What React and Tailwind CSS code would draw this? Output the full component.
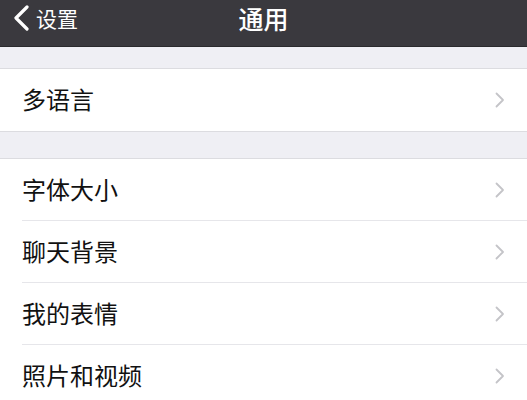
const font = { fontFamily: '"Noto Sans CJK SC", "Noto Sans", sans-serif' };

function Chevron() {
  return (
    <svg width="10" height="16" viewBox="0 0 10 16" className="shrink-0">
      <path d="M1.5 1.5 L8 8 L1.5 14.5" fill="none" stroke="#c4c4c8" strokeWidth="1.8" strokeLinecap="round" strokeLinejoin="round" />
    </svg>
  );
}

function Row({ label, last }) {
  return (
    <div className="flex h-[62px] items-center pl-[22px] bg-white">
      <div className={`flex h-full flex-1 items-center pr-[22px] ${last ? '' : 'border-b border-[#e6e6ea]'}`}>
        <span className="flex-1 text-[24px] leading-none text-[#111] -mt-[2px]">{label}</span>
        <Chevron />
      </div>
    </div>
  );
}

export default function App() {
  return (
    <div className="w-[527px] h-[400px] overflow-hidden bg-[#efeff4]" style={font}>
      <div className="relative flex h-[47px] items-start pt-[5px] bg-[#3a393e] border-b border-[#2a2a2d]">
        <div className="flex h-[26px] items-center pl-[12px] text-white">
          <svg width="20" height="26" viewBox="0 0 20 26">
            <path d="M15 2 L4 13 L15 24" fill="none" stroke="white" strokeWidth="3.2" strokeLinecap="round" strokeLinejoin="round" />
          </svg>
          <span className="ml-[4px] text-[21px] leading-none">设置</span>
        </div>
        <div className="absolute left-0 right-0 top-[5px] flex h-[26px] items-center justify-center text-[25px] leading-none text-white font-medium pointer-events-none">通用</div>
      </div>
      <div className="h-[21px]" />
      <div className="border-y border-[#dcdce0]">
        <Row label="多语言" last />
      </div>
      <div className="h-[26px]" />
      <div className="border-t border-[#dcdce0]">
        <Row label="字体大小" />
        <Row label="聊天背景" />
        <Row label="我的表情" />
        <Row label="照片和视频" />
      </div>
    </div>
  );
}
